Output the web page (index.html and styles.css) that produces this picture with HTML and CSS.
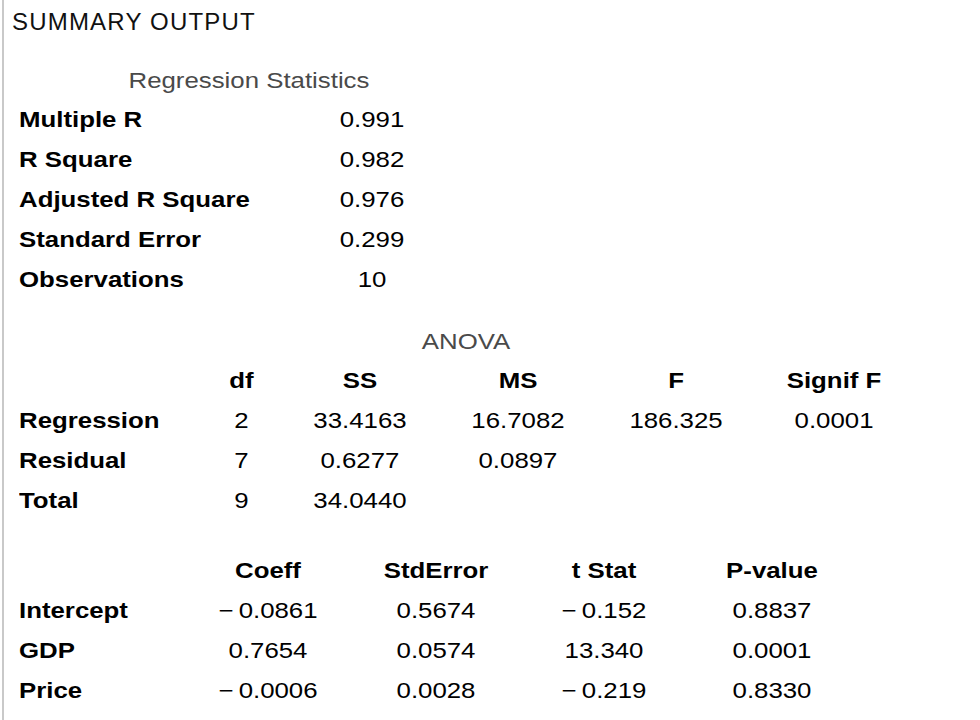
FILE: index.html
```html
<!DOCTYPE html>
<html lang="en">
<head>
<meta charset="utf-8">
<title>Summary Output</title>
<link rel="stylesheet" href="styles.css">
</head>
<body>
<div class="page">
  <h1 class="title">SUMMARY OUTPUT</h1>
  <div class="sheet">
    <section class="stats">
      <div class="caption">Regression Statistics</div>
      <table class="grid">
        <colgroup><col class="c-slbl"><col class="c-sval"></colgroup>
        <tbody>
          <tr><td class="lbl">Multiple R</td><td>0.991</td></tr>
          <tr><td class="lbl">R Square</td><td>0.982</td></tr>
          <tr><td class="lbl">Adjusted R Square</td><td>0.976</td></tr>
          <tr><td class="lbl">Standard Error</td><td>0.299</td></tr>
          <tr><td class="lbl">Observations</td><td>10</td></tr>
        </tbody>
      </table>
    </section>

    <section class="anova">
      <div class="caption">ANOVA</div>
      <table class="grid">
        <colgroup><col class="c-albl"><col class="c-df"><col class="c-a"><col class="c-a"><col class="c-a"><col class="c-a"></colgroup>
        <thead>
          <tr><th></th><th>df</th><th>SS</th><th>MS</th><th>F</th><th>Signif F</th></tr>
        </thead>
        <tbody>
          <tr><td class="lbl">Regression</td><td>2</td><td>33.4163</td><td>16.7082</td><td>186.325</td><td>0.0001</td></tr>
          <tr><td class="lbl">Residual</td><td>7</td><td>0.6277</td><td>0.0897</td><td></td><td></td></tr>
          <tr><td class="lbl">Total</td><td>9</td><td>34.0440</td><td></td><td></td><td></td></tr>
        </tbody>
      </table>
    </section>

    <section class="coef">
      <table class="grid">
        <colgroup><col class="c-clbl"><col class="c-c"><col class="c-c"><col class="c-c"><col class="c-c"></colgroup>
        <thead>
          <tr><th></th><th>Coeff</th><th>StdError</th><th>t Stat</th><th>P-value</th></tr>
        </thead>
        <tbody>
          <tr><td class="lbl">Intercept</td><td>&minus;&thinsp;0.0861</td><td>0.5674</td><td>&minus;&thinsp;0.152</td><td>0.8837</td></tr>
          <tr><td class="lbl">GDP</td><td>0.7654</td><td>0.0574</td><td>13.340</td><td>0.0001</td></tr>
          <tr><td class="lbl">Price</td><td>&minus;&thinsp;0.0006</td><td>0.0028</td><td>&minus;&thinsp;0.219</td><td>0.8330</td></tr>
        </tbody>
      </table>
    </section>
  </div>
</div>
</body>
</html>
```

FILE: styles.css
```css
* { box-sizing: border-box; }

html, body {
  margin: 0;
  background: #ffffff;
}

body {
  font-family: "Liberation Sans", Arial, Helvetica, sans-serif;
  color: #000000;
}

.page {
  margin-left: 2px;
  border-left: 2px solid #c9c9c9;
  min-height: 720px;
  padding-top: 2px;
}

.title {
  margin: 0 0 0 8px;
  font-size: 24px;
  font-weight: normal;
  line-height: 40px;
  letter-spacing: 1.2px;
  color: #111111;
}

.sheet {
  margin-left: 15px;
  width: 800px;
  font-size: 21.5px;
  transform: scaleX(1.2);
  transform-origin: 0 0;
}

.caption {
  color: #4a4a4a;
  line-height: 38px;
  text-align: center;
}

.stats .caption {
  margin-top: 20px;
  width: 383.3px;
}

.anova .caption {
  margin-top: 23px;
  width: 745px;
}

.coef {
  margin-top: 30px;
}

.grid {
  border-collapse: collapse;
  table-layout: fixed;
}

.grid td,
.grid th {
  padding: 0;
  height: 40px;
  line-height: 40px;
  text-align: center;
  white-space: nowrap;
  font-weight: normal;
}

.grid th {
  font-weight: bold;
}

.grid .lbl {
  text-align: left;
  font-weight: bold;
}

.c-slbl { width: 234.2px; }
.c-sval { width: 120px; }

.c-albl { width: 152.5px; }
.c-df { width: 65.8px; }
.c-a { width: 131.7px; }

.c-clbl { width: 137.5px; }
.c-c { width: 140px; }
```
